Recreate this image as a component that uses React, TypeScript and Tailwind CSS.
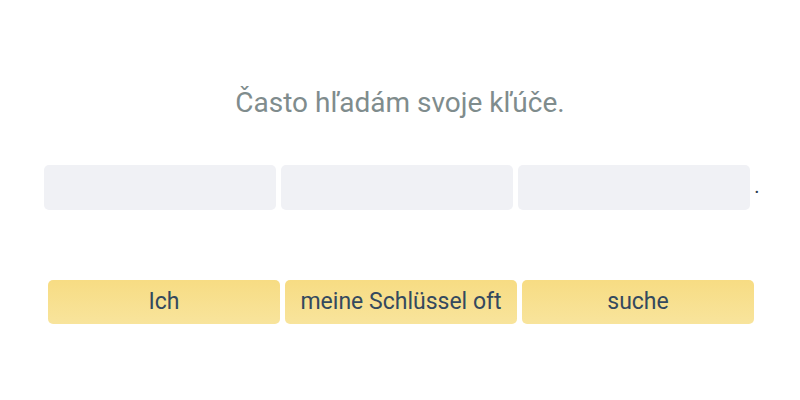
import React from 'react';

const words = ['Ich', 'meine Schlüssel oft', 'suche'];

export default function App() {
  return (
    <div className="w-[800px] h-[400px] bg-white flex flex-col items-center" style={{ fontFamily: 'Roboto, "Noto Sans", sans-serif' }}>
      {/* Prompt */}
      <p className="mt-[85px] text-[28px] leading-[36px] text-[#7f8c8d]">Často hľadám svoje kľúče.</p>

      {/* Drop slots */}
      <div className="mt-[44px] flex items-center gap-[5px] pl-[4px]">
        {[0, 1, 2].map((i) => (
          <div key={i} className="w-[232px] h-[45px] rounded-[5px] bg-[#f0f1f5]" />
        ))}
        <span className="text-[20px] text-[#2c3e50] leading-none -ml-[1px] -mt-[4px]">.</span>
      </div>

      {/* Word bank */}
      <div className="mt-[70px] flex gap-[5px] pl-[2px]">
        {words.map((w) => (
          <button
            key={w}
            className="w-[232px] h-[44px] rounded-[5px] bg-gradient-to-b from-[#f7dc83] to-[#f8e49c] text-[23px] text-[#34495e]"
          >
            {w}
          </button>
        ))}
      </div>
    </div>
  );
}
